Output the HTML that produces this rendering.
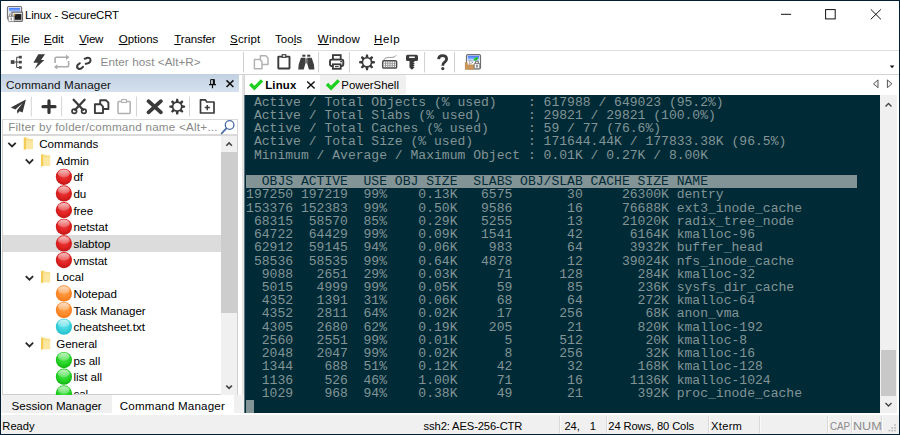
<!DOCTYPE html>
<html>
<head>
<meta charset="utf-8">
<title>Linux - SecureCRT</title>
<style>
*{box-sizing:border-box;margin:0;padding:0}
html,body{width:900px;height:435px;overflow:hidden;background:#fff}
body{font-family:"Liberation Sans",sans-serif;font-size:12px;color:#000;position:relative}
.abs{position:absolute}
#win{position:absolute;left:0;top:0;width:900px;height:435px;background:#fff;overflow:hidden}
#bt,#bl,#br,#bb{position:absolute;background:#031d31;z-index:50}
#bt{left:0;top:0;width:900px;height:1px}
#bl{left:0;top:0;width:1.15px;height:435px}
#br{right:0;top:0;width:1.35px;height:435px}
#bb{left:0;bottom:0;width:900px;height:1.4px}
/* title */
#title{left:25px;top:7px;font-size:12.6px;line-height:16px;white-space:nowrap;color:#000}
/* menu */
.mi{position:absolute;top:32px;font-size:12.4px;line-height:16px;white-space:nowrap}
.mi u{text-decoration:underline;text-decoration-thickness:1px;text-underline-offset:1px}
#menuline{left:1px;top:50px;width:898px;height:1px;background:#dedede}
/* toolbar */
#tbline{left:1px;top:74px;width:898px;height:1px;background:#d3d3d3}
#host{left:101px;top:55px;font-size:12.3px;line-height:16px;color:#8a8a8a;white-space:nowrap}
.vsep{position:absolute;width:1px;background:#d6d6d6}
/* left panel */
#cmhead{left:1px;top:74.2px;width:238px;height:18.2px;background:linear-gradient(#c2d1e2,#d5e1ee)}
#cmtitle{left:6px;top:76px;font-size:12.4px;line-height:16px;white-space:nowrap;color:#111}
#cmtool{left:1px;top:93px;width:238px;height:26px;background:#fff}
#filter{left:2px;top:119px;width:236px;height:16px;border:1px solid #d9d9d9;background:#fff}
#filtertxt{left:8px;top:119px;font-size:12.4px;line-height:16px;color:#8a8a8a;white-space:nowrap}
#tree{left:2.3px;top:135px;width:235.4px;height:260.2px;background:#fff;overflow:hidden;border:1px solid #cfcfcf;border-top-color:#d9d9d9}
#btabact{left:111.7px;top:394.7px;width:122.5px;height:19px;background:#fff}
.trow{position:absolute;font-size:11.6px;line-height:16px;white-space:nowrap;letter-spacing:-0.05px}
.tsel{position:absolute;left:1px;width:217.7px;height:16.5px;background:#dcdcdc}
#tsb{left:220.7px;top:135.6px;width:16.6px;height:259px;background:#f0f0f0}
#tsbthumb{left:220.7px;top:152.4px;width:16.6px;height:160.3px;background:#cdcdcd}
#split{left:239px;top:75px;width:5.5px;height:319.7px;background:#fff;border-left:3.3px solid #fff;border-right:1.4px solid #fff;background:#e4e4e4}
/* bottom tabs */
#btabs{left:1px;top:394.7px;width:243px;height:21px;background:#f0f0f0}
.btab{position:absolute;font-size:12.4px;line-height:16px;white-space:nowrap}
/* session tabs */
#tabstrip{left:244px;top:75px;width:654.6px;height:20px;background:#fff}
#tab1{left:243.6px;top:75px;width:76.6px;height:20px;background:#fff;border-left:1px solid #d2d2d2}
#tab2{left:320px;top:75px;width:85.5px;height:19px;background:#f0f0f0}
.tabt{position:absolute;font-size:12.4px;line-height:16px;white-space:nowrap}
/* terminal */
#term{left:244px;top:95px;width:636px;height:318px;background:#002b36;overflow:hidden}
#term pre{position:absolute;left:2.1px;top:0.69px;font-family:"Liberation Mono",monospace;font-size:13.05px;line-height:13.235px;color:#839496;white-space:pre}
#term .hl{color:#002b36}
#hlbar{position:absolute;left:2px;top:80px;width:611px;height:13px;background:#839496}
#cursor{position:absolute;left:2px;top:305px;width:8px;height:13px;background:#839496}
#vsb{left:880px;top:95px;width:17px;height:318px;background:#f0f0f0}
#vthumb{left:881px;top:350px;width:15px;height:46px;background:#c8c8c8}
/* status */
#status{left:1px;top:413px;width:898px;height:21px;background:#f0f0f0;border-top:2px solid #fff}
.st{position:absolute;top:418px;font-size:12.4px;line-height:16px;white-space:nowrap}
.ssep{position:absolute;top:416px;width:1px;height:17px;background:#dadada;box-shadow:1px 0 0 #fafafa}
svg{position:absolute;overflow:visible}
</style>
</head>
<body>
<div id="win">
<div id="bt"></div><div id="bl"></div><div id="br"></div><div id="bb"></div>


<!-- TITLE ICON + WINDOW CONTROLS + TOOLBAR ICONS (one full-size svg overlay) -->
<svg id="chrome" width="900" height="96" viewBox="0 0 900 96" style="left:0;top:0;z-index:5">
<defs>
<linearGradient id="gblue" x1="0" y1="0" x2="0" y2="1"><stop offset="0" stop-color="#3f74ff"/><stop offset="1" stop-color="#8db4ff"/></linearGradient>
</defs>
<!-- title icon -->
<rect x="7.5" y="6.5" width="14.1" height="12.8" rx="1.2" fill="#f6f6f6" stroke="#747474" stroke-width="1.2"/>
<rect x="8.9" y="7.8" width="11.3" height="3.2" fill="url(#gblue)"/>
<rect x="8.9" y="11" width="11.3" height="1.4" fill="#c4d8ff"/>
<rect x="11.7" y="12.2" width="10.8" height="9.2" rx="0.8" fill="#e6e6e6" stroke="#6c6c6c" stroke-width="1.2"/>
<rect x="14.4" y="14.1" width="6.9" height="5.7" fill="#1c1c1c"/>
<rect x="14" y="14.4" width="1.3" height="1.3" fill="#f0a020"/>
<path d="M9.5 16.8 V15.4 a1.7 1.7 0 0 1 3.4 0 V16.8" fill="none" stroke="#a8a8a8" stroke-width="1.4"/>
<rect x="8.3" y="16.4" width="5.8" height="5.2" rx="0.6" fill="#fafafa" stroke="#8a8a8a" stroke-width="0.9"/>
<rect x="10.6" y="17.6" width="1.3" height="2.8" fill="#8a8a8a"/>
<!-- window controls -->
<path d="M781 14.3 H791.1" stroke="#111" stroke-width="1" fill="none"/>
<rect x="825.6" y="9.6" width="9.6" height="9.3" fill="none" stroke="#111" stroke-width="1"/>
<path d="M870.8 9.4 L880.9 19.3 M880.9 9.4 L870.8 19.3" stroke="#111" stroke-width="1" fill="none"/>

<!-- toolbar: connect tree -->
<g fill="#444">
<rect x="10.8" y="60.2" width="3.7" height="3.7"/>
<rect x="18.9" y="55.8" width="2.9" height="2.7"/>
<rect x="18.9" y="60.8" width="2.9" height="2.7"/>
<rect x="18.9" y="66.2" width="2.9" height="2.6"/>
</g>
<path d="M14.5 62.1 H19 M19 57.2 H16.7 V67.5 H19" fill="none" stroke="#444" stroke-width="1"/>
<!-- lightning -->
<path d="M38.3 54.2 L45 54.2 L41 60 L44.4 60 L34.6 69.3 L37.9 62.7 L33.4 62.7 Z" fill="#3a3a3a"/>
<!-- loop arrows (disabled) -->
<g fill="none" stroke="#ababab" stroke-width="1.6" stroke-linejoin="round">
<path d="M55.1 63 V58.4 a1.2 1.2 0 0 1 1.2 -1.2 H66.4"/>
<path d="M68.6 61 V65.6 a1.2 1.2 0 0 1 -1.2 1.2 H57"/>
</g>
<path d="M66 54.5 L69.4 57.2 L66 59.9 Z" fill="#ababab"/>
<path d="M57.4 64.2 L53.9 66.9 L57.4 69.6 Z" fill="#ababab"/>
<!-- chain link (broken) -->
<g fill="none" stroke="#3a3a3a" stroke-width="2" stroke-linecap="round">
<path d="M84.7 58.7 L87.6 57.8 Q90.6 57.6 90.5 60.6 Q90.2 63.2 85.8 63.8"/>
<path d="M79.8 63.2 L77.6 65 Q76.2 67.4 78.6 68.8 Q80.6 69.6 83 66.8"/>
</g>
<!-- separators -->
<g stroke="#cfcfcf" stroke-width="1">
<path d="M243.5 52 V72.5 M318.6 52 V72.5 M349.4 52 V72.5 M424.6 52 V72.5 M454.5 52 V72.5"/>
</g>
<!-- copy (disabled) -->
<g fill="#fff" stroke="#b2b2b2" stroke-width="1.5" stroke-linejoin="round">
<path d="M260.4 55.8 H265.8 L268 58 V64.5 H260.4 Z"/>
<path d="M254.4 59.5 H259.8 L262 61.7 V68.7 H254.4 Z"/>
</g>
<!-- clipboard -->
<rect x="278.3" y="56.6" width="11.2" height="11.9" rx="0.5" fill="#fff" stroke="#3a3a3a" stroke-width="1.9"/>
<rect x="282.2" y="54.7" width="3.6" height="2.6" fill="#fff" stroke="#3a3a3a" stroke-width="1.1"/>
<!-- binoculars -->
<g fill="#3e3e3e">
<path d="M300.9 57.8 H305.4 V63.5 L303.7 69.4 H298.2 L298.7 64.5 Z"/>
<path d="M311.7 57.8 H307.2 V63.5 L308.9 69.4 H314.4 L313.9 64.5 Z"/>
<rect x="302.3" y="54.7" width="3.1" height="2"/>
<rect x="307.2" y="54.7" width="3.1" height="2"/>
<rect x="305.2" y="58.4" width="2.2" height="5" fill="#7a7a7a"/>
</g>
<!-- printer -->
<g>
<rect x="332.9" y="55.1" width="7.8" height="4.6" fill="#fff" stroke="#3a3a3a" stroke-width="1.8"/>
<rect x="330" y="59.6" width="13.3" height="6.4" rx="1.4" fill="#fff" stroke="#3a3a3a" stroke-width="1.9"/>
<rect x="332.9" y="64.3" width="7.8" height="4.5" fill="#fff" stroke="#3a3a3a" stroke-width="1.8"/>
<path d="M335 66.6 H338.6" stroke="#3a3a3a" stroke-width="1.1"/>
<rect x="340.2" y="61" width="1.8" height="1.2" fill="#3a3a3a"/>
</g>
<!-- gear -->
<g transform="translate(367 62.3)"><g fill="#3a3a3a"><path d="M-1.55 -4.6 L-0.95 -7.9 H0.95 L1.55 -4.6 Z" transform="rotate(0)"/><path d="M-1.55 -4.6 L-0.95 -7.9 H0.95 L1.55 -4.6 Z" transform="rotate(45)"/><path d="M-1.55 -4.6 L-0.95 -7.9 H0.95 L1.55 -4.6 Z" transform="rotate(90)"/><path d="M-1.55 -4.6 L-0.95 -7.9 H0.95 L1.55 -4.6 Z" transform="rotate(135)"/><path d="M-1.55 -4.6 L-0.95 -7.9 H0.95 L1.55 -4.6 Z" transform="rotate(180)"/><path d="M-1.55 -4.6 L-0.95 -7.9 H0.95 L1.55 -4.6 Z" transform="rotate(225)"/><path d="M-1.55 -4.6 L-0.95 -7.9 H0.95 L1.55 -4.6 Z" transform="rotate(270)"/><path d="M-1.55 -4.6 L-0.95 -7.9 H0.95 L1.55 -4.6 Z" transform="rotate(315)"/></g><circle r="5.3" fill="#3a3a3a"/><circle r="3.7" fill="#fff"/></g>
<!-- keyboard -->
<rect x="382.7" y="60.8" width="13.9" height="7.3" rx="1.2" fill="#fff" stroke="#4a4a4a" stroke-width="1.5"/>
<path d="M385.6 61.6 V67.4 M387.8 61.6 V67.4 M390 61.6 V67.4 M392.2 61.6 V67.4 M394.4 61.6 V67.4" stroke="#7a7a7a" stroke-width="0.9" fill="none"/>
<path d="M383.6 63.4 H395.8 M383.6 65.6 H395.8" stroke="#9a9a9a" stroke-width="0.7" fill="none"/>
<path d="M383.6 60.2 Q384.4 57.6 388.4 57.4 Q392.4 57.6 394.2 57 Q395.6 56.4 396.2 55.3" fill="none" stroke="#7c7c7c" stroke-width="0.8"/>
<!-- key -->
<g fill="#3a3a3a">
<rect x="406" y="54.8" width="12" height="6.2" rx="1.6"/>
<path d="M409.5 60.5 H414.4 V62.3 H413.5 V63.1 H414.4 V64.2 H413.5 V65 H414.4 V66.1 H413.5 V66.9 H414.4 V67.6 L411.9 69.8 L409.5 67.6 Z"/>
</g>
<rect x="409" y="56.4" width="6" height="1.5" rx="0.7" fill="#fff"/>
<!-- question -->
<path d="M438.6 59.2 Q438.8 55.6 442.6 55.6 Q446.6 55.6 446.6 59 Q446.6 61 444.6 62.2 Q442.8 63.4 442.8 65.8" fill="none" stroke="#3a3a3a" stroke-width="2.8"/>
<circle cx="442.8" cy="68.6" r="1.6" fill="#3a3a3a"/>
<!-- coloured session icon -->
<rect x="466.5" y="54.6" width="14" height="14.3" rx="1.4" fill="#fff" stroke="#6e6e6e" stroke-width="1.2"/>
<rect x="467.7" y="55.7" width="11.6" height="3.4" fill="url(#gblue)"/>
<rect x="467.7" y="59.1" width="11.6" height="2" fill="#b4cfff"/>
<path d="M469.4 60 L473 62.2 L469.4 64.4 Z" fill="#fff" stroke="#8a8a8a" stroke-width="0.7"/>
<path d="M464.9 62.2 H467.6 V64.6 H474.2 V69.8 H464.9 Z" fill="#c8955a"/>
<path d="M473.4 60.6 Q474 57.6 477.2 57.2 Q478.6 57.4 478.2 58.8 Q476.6 61.2 473.4 60.6 Z" fill="#22c422"/>
<path d="M475.4 63.6 V62.6 a1.5 1.5 0 0 1 3 0 V63.6" fill="none" stroke="#7c7c7c" stroke-width="1.2"/>
<rect x="474.2" y="63.4" width="5.6" height="5.4" rx="0.7" fill="#f4f4f4" stroke="#6e6e6e" stroke-width="0.9"/>
<rect x="476.3" y="64.7" width="1.4" height="2.8" fill="#6a6a6a"/>
<!-- toolbar overflow arrow -->
<path d="M889.8 65.6 H894.4 L892.1 68.2 Z" fill="#111"/>
<!-- tab scroll arrows -->
<path d="M878 79.9 V87.7 L873.5 83.8 Z" fill="#f4f4f4" stroke="#444" stroke-width="0.9"/>
<path d="M887.4 79.9 V87.7 L891.9 83.8 Z" fill="#f4f4f4" stroke="#444" stroke-width="0.9"/>
</svg>

<!-- TITLE BAR -->
<div id="title" class="abs" style="left:25.0px;top:6.95px;font-size:11.4px;letter-spacing:-0.169px;">Linux - SecureCRT</div>

<!-- MENU -->
<div class="mi" style="left:11.3px;top:31.12px;font-size:11.5px;letter-spacing:0.0px;"><u>F</u>ile</div>
<div class="mi" style="left:44.0px;top:31.12px;font-size:11.5px;letter-spacing:0.0px;"><u>E</u>dit</div>
<div class="mi" style="left:79.3px;top:31.12px;font-size:11.5px;letter-spacing:-0.2px;"><u>V</u>iew</div>
<div class="mi" style="left:118.7px;top:31.12px;font-size:11.5px;letter-spacing:0.0px;"><u>O</u>ptions</div>
<div class="mi" style="left:174.3px;top:31.12px;font-size:11.5px;letter-spacing:-0.157px;"><u>T</u>ransfer</div>
<div class="mi" style="left:230.1px;top:31.12px;font-size:11.5px;letter-spacing:0.12px;"><u>S</u>cript</div>
<div class="mi" style="left:275.1px;top:31.12px;font-size:11.5px;letter-spacing:0.0px;">Too<u>l</u>s</div>
<div class="mi" style="left:317.8px;top:31.12px;font-size:11.5px;letter-spacing:0.24px;"><u>W</u>indow</div>
<div class="mi" style="left:374.1px;top:31.12px;font-size:11.5px;letter-spacing:0.6px;"><u>H</u>elp</div>
<div id="menuline" class="abs"></div>

<!-- TOOLBAR -->
<div id="host" class="abs" style="left:100.6px;top:54.35px;font-size:11.7px;letter-spacing:0.059px;">Enter host &lt;Alt+R&gt;</div>
<div id="tbline" class="abs"></div>

<!-- LEFT PANEL -->
<div id="cmhead" class="abs"></div>
<div id="cmtitle" class="abs" style="left:6.0px;top:76.65px;font-size:11.7px;letter-spacing:0.114px">Command Manager</div>
<div id="cmtool" class="abs"></div>
<div id="filter" class="abs"></div>
<div id="filtertxt" class="abs" style="left:8.2px;top:119.15px;font-size:11.7px;letter-spacing:0.216px;">Filter by folder/command name &lt;Alt+...</div>
<div id="tree" class="abs">
<div style="position:absolute;left:-1.3px;top:-1px;width:220px;height:262px">
<div class="trow" style="top:1.00px;left:37.3px">Commands</div>
<div class="trow" style="top:18.00px;left:54.2px">Admin</div>
<div class="trow" style="top:34.00px;left:71.4px">df</div>
<div class="trow" style="top:51.00px;left:71.4px">du</div>
<div class="trow" style="top:68.00px;left:71.4px">free</div>
<div class="trow" style="top:84.00px;left:71.4px">netstat</div>
<div class="tsel" style="top:100.21px"></div>
<div class="trow" style="top:101.00px;left:71.4px">slabtop</div>
<div class="trow" style="top:118.00px;left:71.4px">vmstat</div>
<div class="trow" style="top:134.00px;left:54.2px">Local</div>
<div class="trow" style="top:151.00px;left:71.4px">Notepad</div>
<div class="trow" style="top:168.00px;left:71.4px">Task Manager</div>
<div class="trow" style="top:184.00px;left:71.4px">cheatsheet.txt</div>
<div class="trow" style="top:201.00px;left:54.2px">General</div>
<div class="trow" style="top:218.00px;left:71.4px">ps all</div>
<div class="trow" style="top:234.00px;left:71.4px">list all</div>
<div class="trow" style="top:251.00px;left:71.4px">cal</div>

</div></div>
<svg id="treeicons" width="221" height="259.5" viewBox="0 135 221 259.5" style="left:0;top:135px;overflow:hidden"><defs><linearGradient id="hl" x1="0" y1="0" x2="0" y2="1"><stop offset="0" stop-color="#fff" stop-opacity="0.72"/><stop offset="1" stop-color="#fff" stop-opacity="0.16"/></linearGradient><radialGradient id="ball_red" cx="0.5" cy="0.4" r="0.62"><stop offset="0" stop-color="#ec4040"/><stop offset="0.6" stop-color="#e02222"/><stop offset="1" stop-color="#bc1414"/></radialGradient><radialGradient id="ball_orange" cx="0.5" cy="0.4" r="0.62"><stop offset="0" stop-color="#ffa04a"/><stop offset="0.6" stop-color="#ff8c2e"/><stop offset="1" stop-color="#ee7414"/></radialGradient><radialGradient id="ball_cyan" cx="0.5" cy="0.4" r="0.62"><stop offset="0" stop-color="#62e2ec"/><stop offset="0.6" stop-color="#38d2dc"/><stop offset="1" stop-color="#20b8c6"/></radialGradient><radialGradient id="ball_green" cx="0.5" cy="0.4" r="0.62"><stop offset="0" stop-color="#4ee44e"/><stop offset="0.6" stop-color="#24d424"/><stop offset="1" stop-color="#10ac10"/></radialGradient></defs><path d="M8.35 142.80 L12.05 146.50 L15.75 142.80" fill="none" stroke="#2a2a2a" stroke-width="1.8"/>
<g transform="translate(23.80 137.50)"><path d="M0 1 Q0 0 1 0 H4.2 L5.2 1.4 H8.4 Q9.2 1.4 9.2 2.2 V11.8 H1.6 L0 12.6 Z" fill="#fbe7a0"/><path d="M0 1 Q0 0 1 0 H2.2 V11.6 L0 12.6 Z" fill="#f2cc55"/><path d="M2.2 1.4 H8.4 Q9.2 1.4 9.2 2.2 V3 H2.2 Z" fill="#f7dc85"/></g>
<path d="M25.75 159.46 L29.45 163.16 L33.15 159.46" fill="none" stroke="#2a2a2a" stroke-width="1.8"/>
<g transform="translate(41.00 154.16)"><path d="M0 1 Q0 0 1 0 H4.2 L5.2 1.4 H8.4 Q9.2 1.4 9.2 2.2 V11.8 H1.6 L0 12.6 Z" fill="#fbe7a0"/><path d="M0 1 Q0 0 1 0 H2.2 V11.6 L0 12.6 Z" fill="#f2cc55"/><path d="M2.2 1.4 H8.4 Q9.2 1.4 9.2 2.2 V3 H2.2 Z" fill="#f7dc85"/></g>
<circle cx="63.9" cy="176.81" r="8.1" fill="url(#ball_red)"/><ellipse cx="63.8" cy="173.51" rx="5.9" ry="3.9" fill="url(#hl)"/>
<circle cx="63.9" cy="193.47" r="8.1" fill="url(#ball_red)"/><ellipse cx="63.8" cy="190.17" rx="5.9" ry="3.9" fill="url(#hl)"/>
<circle cx="63.9" cy="210.13" r="8.1" fill="url(#ball_red)"/><ellipse cx="63.8" cy="206.83" rx="5.9" ry="3.9" fill="url(#hl)"/>
<circle cx="63.9" cy="226.78" r="8.1" fill="url(#ball_red)"/><ellipse cx="63.8" cy="223.49" rx="5.9" ry="3.9" fill="url(#hl)"/>
<circle cx="63.9" cy="243.44" r="8.1" fill="url(#ball_red)"/><ellipse cx="63.8" cy="240.14" rx="5.9" ry="3.9" fill="url(#hl)"/>
<circle cx="63.9" cy="260.10" r="8.1" fill="url(#ball_red)"/><ellipse cx="63.8" cy="256.80" rx="5.9" ry="3.9" fill="url(#hl)"/>
<path d="M25.75 276.06 L29.45 279.76 L33.15 276.06" fill="none" stroke="#2a2a2a" stroke-width="1.8"/>
<g transform="translate(41.00 270.76)"><path d="M0 1 Q0 0 1 0 H4.2 L5.2 1.4 H8.4 Q9.2 1.4 9.2 2.2 V11.8 H1.6 L0 12.6 Z" fill="#fbe7a0"/><path d="M0 1 Q0 0 1 0 H2.2 V11.6 L0 12.6 Z" fill="#f2cc55"/><path d="M2.2 1.4 H8.4 Q9.2 1.4 9.2 2.2 V3 H2.2 Z" fill="#f7dc85"/></g>
<circle cx="63.9" cy="293.41" r="8.1" fill="url(#ball_orange)"/><ellipse cx="63.8" cy="290.11" rx="5.9" ry="3.9" fill="url(#hl)"/>
<circle cx="63.9" cy="310.07" r="8.1" fill="url(#ball_orange)"/><ellipse cx="63.8" cy="306.77" rx="5.9" ry="3.9" fill="url(#hl)"/>
<circle cx="63.9" cy="326.73" r="8.1" fill="url(#ball_cyan)"/><ellipse cx="63.8" cy="323.43" rx="5.9" ry="3.9" fill="url(#hl)"/>
<path d="M25.75 342.68 L29.45 346.38 L33.15 342.68" fill="none" stroke="#2a2a2a" stroke-width="1.8"/>
<g transform="translate(41.00 337.38)"><path d="M0 1 Q0 0 1 0 H4.2 L5.2 1.4 H8.4 Q9.2 1.4 9.2 2.2 V11.8 H1.6 L0 12.6 Z" fill="#fbe7a0"/><path d="M0 1 Q0 0 1 0 H2.2 V11.6 L0 12.6 Z" fill="#f2cc55"/><path d="M2.2 1.4 H8.4 Q9.2 1.4 9.2 2.2 V3 H2.2 Z" fill="#f7dc85"/></g>
<circle cx="63.9" cy="360.04" r="8.1" fill="url(#ball_green)"/><ellipse cx="63.8" cy="356.74" rx="5.9" ry="3.9" fill="url(#hl)"/>
<circle cx="63.9" cy="376.70" r="8.1" fill="url(#ball_green)"/><ellipse cx="63.8" cy="373.40" rx="5.9" ry="3.9" fill="url(#hl)"/>
<circle cx="63.9" cy="393.36" r="8.1" fill="url(#ball_green)"/><ellipse cx="63.8" cy="390.06" rx="5.9" ry="3.9" fill="url(#hl)"/></svg>
<div id="tsb" class="abs"></div>
<div id="tsbthumb" class="abs"></div>
<div id="split" class="abs"></div>

<svg id="lpicons" width="244" height="345" viewBox="0 74 244 345" style="left:0;top:74px">
<!-- pin -->
<path d="M210.6 79.6 H214.4 V84.4 H210.6 Z" fill="none" stroke="#111" stroke-width="1"/>
<path d="M213.6 79.4 V84.4" stroke="#111" stroke-width="1.6"/>
<path d="M209 84.6 H216 M212.5 84.6 V88.3" stroke="#111" stroke-width="1.2" fill="none"/>
<!-- close -->
<path d="M226.5 80.4 L233.4 87 M233.4 80.4 L226.5 87" stroke="#111" stroke-width="1.5" fill="none"/>
<!-- separators -->
<path d="M31.3 96.5 V116.5 M61.6 96.5 V116.5 M136.5 96.5 V116.5 M189.5 96.5 V116.5" stroke="#d4d4d4" stroke-width="1"/>
<!-- send (paper plane) -->
<path d="M25.9 99.6 L10.8 107.6 L15.4 109.6 L22.6 103 L17 110.4 L17.4 113.8 L19.6 111.2 L22.6 112.4 Z" fill="#3a3a3a"/>
<!-- plus -->
<path d="M49 100.9 V112.5 M43 106.7 H55" stroke="#333" stroke-width="3.2" stroke-linecap="round" fill="none"/>
<!-- scissors -->
<g fill="none" stroke="#3a3a3a">
<path d="M73.6 99.8 L83 109.8 M84.6 99.8 L75.2 109.8" stroke-width="2.3" stroke-linecap="round"/>
<ellipse cx="74.3" cy="111.3" rx="2.3" ry="2.1" stroke-width="1.7"/><ellipse cx="83.9" cy="111.3" rx="2.3" ry="2.1" stroke-width="1.7"/>
</g>
<!-- copy -->
<g fill="#fff" stroke="#3a3a3a" stroke-width="1.9" stroke-linejoin="round">
<path d="M100.2 100.2 H106 L108.4 102.6 V109 H100.2 Z"/>
<path d="M94.9 104.2 H100.6 L103 106.6 V113.1 H94.9 Z"/>
</g>
<!-- paste disabled -->
<rect x="118" y="101.4" width="12.2" height="12" rx="0.8" fill="#fff" stroke="#b0b0b0" stroke-width="1.5"/>
<rect x="121.8" y="99.5" width="4.6" height="3" fill="#fff" stroke="#b0b0b0" stroke-width="1.1"/>
<!-- delete X -->
<path d="M148.5 101.2 L160.9 112.3 M160.9 101.2 L148.5 112.3" stroke="#3a3a3a" stroke-width="3.8" stroke-linecap="round" fill="none"/>
<!-- gear -->
<g transform="translate(177.2 106.6)"><g fill="#3a3a3a"><path d="M-1.55 -4.6 L-0.95 -7.9 H0.95 L1.55 -4.6 Z" transform="rotate(0)"/><path d="M-1.55 -4.6 L-0.95 -7.9 H0.95 L1.55 -4.6 Z" transform="rotate(45)"/><path d="M-1.55 -4.6 L-0.95 -7.9 H0.95 L1.55 -4.6 Z" transform="rotate(90)"/><path d="M-1.55 -4.6 L-0.95 -7.9 H0.95 L1.55 -4.6 Z" transform="rotate(135)"/><path d="M-1.55 -4.6 L-0.95 -7.9 H0.95 L1.55 -4.6 Z" transform="rotate(180)"/><path d="M-1.55 -4.6 L-0.95 -7.9 H0.95 L1.55 -4.6 Z" transform="rotate(225)"/><path d="M-1.55 -4.6 L-0.95 -7.9 H0.95 L1.55 -4.6 Z" transform="rotate(270)"/><path d="M-1.55 -4.6 L-0.95 -7.9 H0.95 L1.55 -4.6 Z" transform="rotate(315)"/></g><circle r="5.3" fill="#3a3a3a"/><circle r="3.7" fill="#fff"/></g>
<!-- folder add -->
<path d="M200.5 113 V99.9 H205.4 L206.8 102 H214 V113 Z" fill="#fff" stroke="#3a3a3a" stroke-width="1.7" stroke-linejoin="round"/>
<path d="M207.3 105 V110.2 M204.7 107.6 H209.9" stroke="#3a3a3a" stroke-width="1.5" fill="none"/>
<!-- magnifier -->
<circle cx="229.6" cy="125" r="4.3" fill="#fff" stroke="#4a6da8" stroke-width="1.3"/>
<path d="M226.4 128.4 L221.6 133.4" stroke="#4a6da8" stroke-width="1.7" stroke-linecap="round"/>
<!-- tree scrollbar arrows -->
<path d="M226.3 145.7 L229.1 142.9 L231.9 145.7" fill="none" stroke="#444" stroke-width="1.6"/>
<path d="M226.3 385.6 L229.1 388.4 L231.9 385.6" fill="none" stroke="#444" stroke-width="1.6"/>
</svg>

<div id="btabs" class="abs"></div>
<div id="btabact" class="abs"></div>
<div class="btab" style="left:11.5px;top:398.18px;font-size:11.6px;letter-spacing:0.0px">Session Manager</div>
<div class="btab" style="left:119.8px;top:397.78px;font-size:11.6px;letter-spacing:0.186px">Command Manager</div>

<!-- SESSION TABS -->
<div id="tabstrip" class="abs"></div>
<div id="tab1" class="abs"></div>
<div id="tab2" class="abs"></div>
<div class="tabt" style="left:265.2px;top:77.15px;font-size:11.4px;letter-spacing:0.2px;font-weight:bold">Linux</div>
<div class="tabt" style="left:341.3px;top:77.15px;font-size:11.4px;letter-spacing:0.0px;">PowerShell</div>
<svg id="tabicons" width="170" height="22" viewBox="240 74 170 22" style="left:240px;top:74px">
<path d="M250.3 84 L254.4 88.1 L262 80.3" fill="none" stroke="#1fcf1f" stroke-width="3.3"/>
<path d="M327 84 L331.1 88.1 L338.7 80.3" fill="none" stroke="#1fcf1f" stroke-width="3.3"/>
<path d="M307.2 81.4 L314.6 88.6 M314.6 81.4 L307.2 88.6" stroke="#111" stroke-width="1.4" fill="none"/>
</svg>

<!-- TERMINAL -->
<div id="term" class="abs"><div style="position:absolute;left:0;top:0;width:1px;height:318px;background:#5c7780"></div><div id="hlbar"></div><pre> Active / Total Objects (% used)    : 617988 / 649023 (95.2%)
 Active / Total Slabs (% used)      : 29821 / 29821 (100.0%)
 Active / Total Caches (% used)     : 59 / 77 (76.6%)
 Active / Total Size (% used)       : 171644.44K / 177833.38K (96.5%)
 Minimum / Average / Maximum Object : 0.01K / 0.27K / 8.00K

<span class="hl">  OBJS ACTIVE  USE OBJ SIZE  SLABS OBJ/SLAB CACHE SIZE NAME                   </span>
197250 197219  99%    0.13K   6575       30     26300K dentry
153376 152383  99%    0.50K   9586       16     76688K ext3_inode_cache
 68315  58570  85%    0.29K   5255       13     21020K radix_tree_node
 64722  64429  99%    0.09K   1541       42      6164K kmalloc-96
 62912  59145  94%    0.06K    983       64      3932K buffer_head
 58536  58535  99%    0.64K   4878       12     39024K nfs_inode_cache
  9088   2651  29%    0.03K     71      128       284K kmalloc-32
  5015   4999  99%    0.05K     59       85       236K sysfs_dir_cache
  4352   1391  31%    0.06K     68       64       272K kmalloc-64
  4352   2811  64%    0.02K     17      256        68K anon_vma
  4305   2680  62%    0.19K    205       21       820K kmalloc-192
  2560   2551  99%    0.01K      5      512        20K kmalloc-8
  2048   2047  99%    0.02K      8      256        32K kmalloc-16
  1344    688  51%    0.12K     42       32       168K kmalloc-128
  1136    526  46%    1.00K     71       16      1136K kmalloc-1024
  1029    968  94%    0.38K     49       21       392K proc_inode_cache</pre><div id="cursor"></div></div>
<div id="vsb" class="abs"></div>
<div id="vthumb" class="abs"></div>
<svg id="sbicons" width="30" height="345" viewBox="870 90 30 345" style="left:870px;top:90px;z-index:5">
<path d="M885.5 106.5 L888.5 103.5 L891.5 106.5" fill="none" stroke="#444" stroke-width="1.4"/>
<path d="M885.5 403 L888.5 406 L891.5 403" fill="none" stroke="#444" stroke-width="1.4"/>
<g fill="#b8b8b8">
<rect x="894.2" y="424.2" width="1.6" height="1.6"/>
<rect x="891.4" y="427" width="1.6" height="1.6"/><rect x="894.2" y="427" width="1.6" height="1.6"/>
<rect x="888.6" y="429.8" width="1.6" height="1.6"/><rect x="891.4" y="429.8" width="1.6" height="1.6"/><rect x="894.2" y="429.8" width="1.6" height="1.6"/>
</g>
</svg>

<!-- STATUS BAR -->
<div id="status" class="abs"></div>
<div class="ssep" style="left:558.9px"></div><div class="ssep" style="left:605.6px"></div><div class="ssep" style="left:707.8px"></div><div class="ssep" style="left:758.9px"></div><div class="ssep" style="left:827.4px"></div><div class="ssep" style="left:851.4px"></div><div class="ssep" style="left:881.4px"></div>
<div class="st" style="left:2.3px;top:417.72px;font-size:11.2px;letter-spacing:0.0px;">Ready</div>
<div class="st" style="left:423.6px;top:417.72px;font-size:11.2px;letter-spacing:-0.119px;">ssh2: AES-256-CTR</div>
<div class="st" style="left:564.4px;top:417.72px;font-size:11.2px;letter-spacing:0.0px;">24,</div>
<div class="st" style="left:589.7px;top:417.72px;font-size:11.2px">1</div>
<div class="st" style="left:608.3px;top:417.72px;font-size:11.2px;letter-spacing:-0.12px;">24 Rows, 80 Cols</div>
<div class="st" style="left:711.1px;top:417.72px;font-size:11.2px;letter-spacing:0.25px;">Xterm</div>
<div class="st" style="left:829.6px;top:417.72px;font-size:11.2px;color:#8c8c8c;transform:scaleX(0.875);transform-origin:0 0">CAP</div>
<div class="st" style="left:853.0px;top:417.72px;font-size:11.2px;color:#8c8c8c;transform:scaleX(1.125);transform-origin:0 0">NUM</div>

</div>
</body>
</html>
